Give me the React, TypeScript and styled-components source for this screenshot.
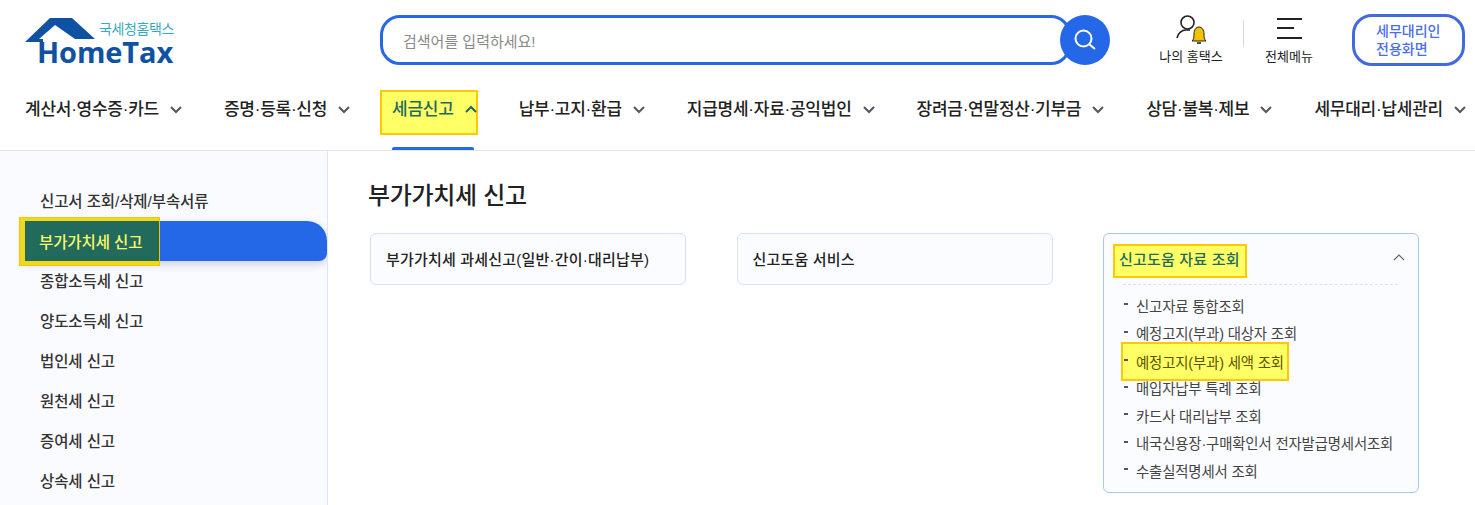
import { createGlobalStyle, styled } from "styled-components";

const GlobalStyle = createGlobalStyle`
  html, body { margin: 0; padding: 0; background: #fff; }
  body {
    width: 1475px;
    height: 505px;
    overflow: hidden;
    font-family: "Liberation Sans", "Noto Sans CJK KR", sans-serif;
    color: #222;
  }
  ul { list-style: none; margin: 0; padding: 0; }
`;

const TopBar = styled.div`
  height: 80px;
  display: flex;
  align-items: flex-start;
  padding: 15px 10px 0 25px;
  box-sizing: border-box;
`;

const Logo = styled.div`
  position: relative;
  width: 150px;
  height: 50px;
  margin-top: 3px;
`;

const LogoSub = styled.span`
  position: absolute;
  left: 74px;
  top: 1px;
  font-size: 14px;
  line-height: 20px;
  letter-spacing: -0.4px;
  color: #37a9c4;
  white-space: nowrap;
`;

const LogoText = styled.span`
  position: absolute;
  left: 12px;
  top: 18px;
  font-family: "Open Sans", sans-serif;
  font-size: 29px;
  line-height: 32px;
  font-weight: 700;
  letter-spacing: -0.1px;
  color: #0f52a4;
`;

const SearchWrap = styled.div`
  display: flex;
  margin-left: 205px;
  width: 730px;
`;

const SearchBox = styled.div`
  width: 691px;
  height: 50px;
  box-sizing: border-box;
  border: 3px solid #2468e8;
  border-radius: 20px;
  padding: 0 20px;
  display: flex;
  align-items: center;
  font-size: 15px;
  color: #8a8a8a;
`;

const SearchButton = styled.div`
  width: 50px;
  height: 50px;
  margin-left: -11px;
  border-radius: 50%;
  background: #2468e8;
  display: flex;
  align-items: center;
  justify-content: center;
`;

const QuickLink = styled.div<{ $width: number; $offset?: number }>`
  width: ${(p) => p.$width}px;
  margin-left: ${(p) => p.$offset ?? 0}px;
  display: flex;
  flex-direction: column;
  align-items: center;
  font-size: 13px;
  line-height: 16px;
  color: #222;
  white-space: nowrap;
  svg { display: block; margin-bottom: 4px; }
`;

const Divider = styled.div`
  width: 1px;
  height: 27px;
  margin-top: 5px;
  background: #d8d8d8;
`;

const AgentButton = styled.div`
  width: 113px;
  height: 52px;
  margin-left: 18px;
  margin-top: -1px;
  box-sizing: border-box;
  border: 3px solid #4169e1;
  border-radius: 20px;
  padding: 0 0 0 21px;
  display: flex;
  align-items: center;
  font-size: 14px;
  line-height: 18px;
  font-weight: 500;
  color: #4a6ee8;
`;

const Nav = styled.nav`
  isolation: isolate;
  height: 71px;
  box-sizing: border-box;
  border-bottom: 1px solid #e6e6e6;
  padding: 0 9px 0 25px;
  display: flex;
  justify-content: space-between;
`;

const NavItem = styled.div<{ $open?: boolean }>`
  position: relative;
  height: 70px;
  box-sizing: border-box;
  padding-top: 18px;
  display: flex;
  gap: 11px;
  font-size: 17px;
  line-height: 23px;
  font-weight: 500;
  letter-spacing: -0.25px;
  color: ${(p) => (p.$open ? "#1f6a5c" : "#222")};
  white-space: nowrap;
  svg { margin-top: 7px; }
  &::before {
    content: ${(p) => (p.$open ? '""' : "none")};
    position: absolute;
    z-index: -1;
    left: -12px;
    top: 10px;
    width: 98px;
    height: 45px;
    box-sizing: border-box;
    background: #ffff66;
    border: 2px solid #ffc800;
  }
  &::after {
    content: ${(p) => (p.$open ? '""' : "none")};
    position: absolute;
    left: 0;
    bottom: 0;
    width: 82px;
    height: 3px;
    background: #2468e8;
    border-radius: 2px 2px 0 0;
  }
`;

const Body = styled.div`
  display: flex;
  height: 354px;
`;

const Sidebar = styled.aside`
  width: 328px;
  box-sizing: border-box;
  background: #fafbff;
  border-right: 1px solid #dce4f5;
  padding-top: 30px;
  overflow: hidden;
`;

const SideItem = styled.li<{ $active?: boolean }>`
  position: relative;
  height: 40px;
  box-sizing: border-box;
  margin-left: 24px;
  padding: 0 0 3px 16px;
  display: flex;
  align-items: center;
  font-size: 15.5px;
  font-weight: 500;
  letter-spacing: -0.1px;
  color: ${(p) => (p.$active ? "#fbfb6a" : "#333")};
  background: ${(p) => (p.$active ? "#2468e8" : "transparent")};
  border-radius: 0 20px 8px 0;
  box-shadow: ${(p) => (p.$active ? "0 3px 8px rgba(60, 70, 110, 0.25)" : "none")};
`;

const SideHighlight = styled.span`
  position: absolute;
  left: -5px;
  top: -4px;
  width: 141px;
  height: 49px;
  box-sizing: border-box;
  border-style: solid;
  border-color: #efd820;
  border-width: 4px 1px 5px 6px;
  outline: 1px solid #f5c400;
  outline-offset: -1px;
  background: #226a5c;
  display: flex;
  align-items: center;
  padding: 0 0 1px 14px;
`;

const Main = styled.main`
  flex: 1;
  padding: 27px 0 0 40px;
`;

const Title = styled.h2`
  margin: 0 0 20px;
  font-size: 24px;
  line-height: 35px;
  font-weight: 500;
  letter-spacing: -0.3px;
  color: #222;
`;

const CardRow = styled.div`
  display: flex;
  align-items: flex-start;
  padding-left: 2px;
  gap: 50.5px;
`;

const Card = styled.div<{ $open?: boolean }>`
  position: relative;
  width: 316px;
  box-sizing: border-box;
  background: #fbfcff;
  border: 1px solid ${(p) => (p.$open ? "#a9c6f2" : "#d3e0f8")};
  border-radius: 6px;
  padding: 0 15px;
  height: ${(p) => (p.$open ? "260px" : "52px")};
`;

const CardTitle = styled.div<{ $mark?: boolean }>`
  position: relative;
  height: 48px;
  display: flex;
  align-items: center;
  font-size: 15px;
  font-weight: 500;
  letter-spacing: 0.2px;
  color: ${(p) => (p.$mark ? "#1f6a5c" : "#222")};
  white-space: nowrap;
`;

const TitleMark = styled.span`
  background: #ffff66;
  border: 2px solid #ffc800;
  box-sizing: border-box;
  margin: 6px 0 0 -6px;
  padding: 0 6px 6px 4px;
  width: 134px;
  height: 34px;
  display: flex;
  align-items: center;
`;

const CloseIcon = styled.svg`
  position: absolute;
  right: -2px;
  top: 19px;
`;

const SubList = styled.ul`
  border-top: 1px dashed #e0e0e0;
  margin: 2px 0 0 4px;
  width: 275px;
  padding-top: 7px;
`;

const SubItem = styled.li<{ $mark?: boolean }>`
  position: relative;
  height: 27.5px;
  box-sizing: border-box;
  padding: 0 0 1px 13px;
  display: flex;
  align-items: center;
  font-size: 14.4px;
  letter-spacing: -0.15px;
  color: ${(p) => (p.$mark ? "#5c5200" : "#444")};
  white-space: nowrap;
  &::before {
    content: "";
    position: absolute;
    left: 1px;
    top: 11px;
    width: 4px;
    height: 2px;
    background: #555;
  }
`;

const SubMark = styled.span`
  position: absolute;
  z-index: 0;
  left: -2px;
  top: -5px;
  width: 168px;
  height: 39px;
  box-sizing: border-box;
  background: #ffff66;
  border: 2px solid #ffc800;
  display: flex;
  align-items: center;
  padding-left: 13px;
  &::before {
    content: "";
    position: absolute;
    left: 1px;
    top: 15px;
    width: 4px;
    height: 2px;
    background: #555;
  }
`;

const navItems = [
  "계산서·영수증·카드",
  "증명·등록·신청",
  "세금신고",
  "납부·고지·환급",
  "지급명세·자료·공익법인",
  "장려금·연말정산·기부금",
  "상담·불복·제보",
  "세무대리·납세관리",
];

const sideItems = [
  "신고서 조회/삭제/부속서류",
  "부가가치세 신고",
  "종합소득세 신고",
  "양도소득세 신고",
  "법인세 신고",
  "원천세 신고",
  "증여세 신고",
  "상속세 신고",
];

const subItems = [
  "신고자료 통합조회",
  "예정고지(부과) 대상자 조회",
  "예정고지(부과) 세액 조회",
  "매입자납부 특례 조회",
  "카드사 대리납부 조회",
  "내국신용장·구매확인서 전자발급명세서조회",
  "수출실적명세서 조회",
];

function Chevron({ up }: { up?: boolean }) {
  return (
    <svg width="12" height="9" viewBox="0 0 12 9" fill="none">
      <path
        d={up ? "M1 7l5-5 5 5" : "M1 2l5 5 5-5"}
        stroke={up ? "#1f6a5c" : "#555560"}
        strokeWidth="2"
      />
    </svg>
  );
}

export default function App() {
  return (
    <>
      <GlobalStyle />
      <TopBar>
        <Logo>
          <svg width="96" height="50" viewBox="0 0 96 50">
            <path
              d="M0 24L25 0H47L70 21H50L30 7L14 21H18V24H0Z"
              fill="#0f52a4"
            />
          </svg>
          <LogoSub>국세청홈택스</LogoSub>
          <LogoText>HomeTax</LogoText>
        </Logo>
        <SearchWrap>
          <SearchBox>검색어를 입력하세요!</SearchBox>
          <SearchButton>
            <svg width="24" height="24" viewBox="0 0 24 24" fill="none" stroke="#fff" strokeWidth="2">
              <circle cx="10.5" cy="10.5" r="8" />
              <path d="M16.5 16.5L22 21" />
            </svg>
          </SearchButton>
        </SearchWrap>
        <QuickLink $width={104} $offset={29}>
          <svg width="30" height="30" viewBox="0 0 30 30" fill="none">
            <circle cx="11.500" cy="7.500" r="6.500" stroke="#222" strokeWidth="1.6" />
            <path d="M1 23c1-5 5-8 9-8h4" stroke="#222" strokeWidth="1.6" />
            <path d="M16 26c1.500-1 2-3 2-7 0-4 2-7 5-7s5 3 5 7c0 4 .5 6 2 7z" fill="#f2c200" stroke="#222" strokeWidth="1" />
            <path d="M21 28h4" stroke="#222" strokeWidth="1.600" />
          </svg>
          나의 홈택스
        </QuickLink>
        <Divider />
        <QuickLink $width={90}>
          <svg width="25" height="30" viewBox="0 0 25 30" fill="none" stroke="#222" strokeWidth="2">
            <path d="M0 4H25M0 13H17M0 23H25" />
          </svg>
          전체메뉴
        </QuickLink>
        <AgentButton>
          세무대리인
          <br />
          전용화면
        </AgentButton>
      </TopBar>
      <Nav>
        {navItems.map((label) => (
          <NavItem key={label} $open={label === "세금신고"}>
            {label}
            <Chevron up={label === "세금신고"} />
          </NavItem>
        ))}
      </Nav>
      <Body>
        <Sidebar>
          <ul>
            {sideItems.map((label, i) => (
              <SideItem key={label} $active={i === 1}>
                {i === 1 ? <SideHighlight>{label}</SideHighlight> : label}
              </SideItem>
            ))}
          </ul>
        </Sidebar>
        <Main>
          <Title>부가가치세 신고</Title>
          <CardRow>
            <Card>
              <CardTitle>부가가치세 과세신고(일반·간이·대리납부)</CardTitle>
            </Card>
            <Card>
              <CardTitle>신고도움 서비스</CardTitle>
            </Card>
            <Card $open>
              <CardTitle $mark>
                <TitleMark>신고도움 자료 조회</TitleMark>
                <CloseIcon width="12" height="8" viewBox="0 0 12 8" fill="none">
                  <path d="M1 7l5-5 5 5" stroke="#666" strokeWidth="1.2" />
                </CloseIcon>
              </CardTitle>
              <SubList>
                {subItems.map((label, i) => (
                  <SubItem key={label} $mark={i === 2}>
                    {i === 2 ? <SubMark>{label}</SubMark> : label}
                  </SubItem>
                ))}
              </SubList>
            </Card>
          </CardRow>
        </Main>
      </Body>
    </>
  );
}
